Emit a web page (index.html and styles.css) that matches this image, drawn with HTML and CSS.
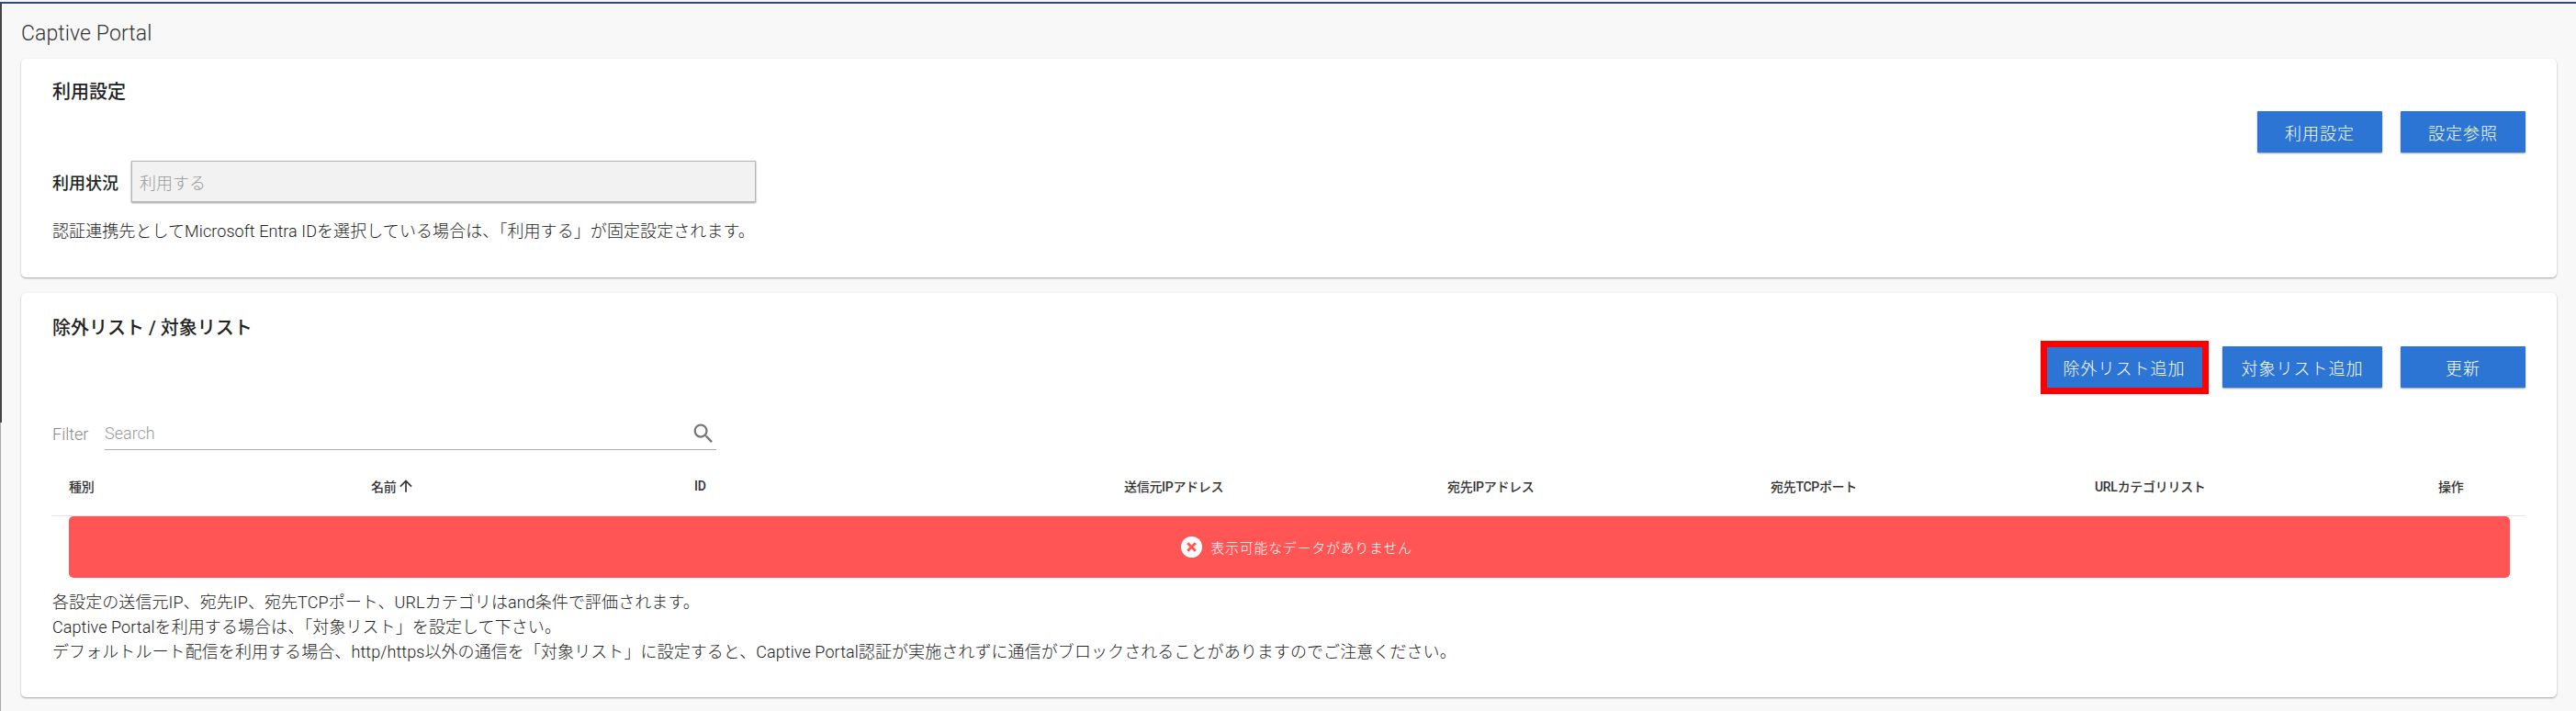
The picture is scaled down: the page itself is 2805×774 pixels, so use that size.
FILE: index.html
```html
<!DOCTYPE html>
<html lang="ja">
<head>
<meta charset="utf-8">
<title>Captive Portal</title>
<link rel="stylesheet" href="styles.css">
</head>
<body>
<main class="page">
  <h1 class="page-title">Captive Portal</h1>
  <section class="card card-usage">
    <h2 class="card-title">利用設定</h2>
    <div class="actions actions-usage">
      <button class="btn">利用設定</button>
      <button class="btn">設定参照</button>
    </div>
    <div class="status-row">
      <span class="status-label">利用状況</span>
      <div class="status-field">利用する</div>
    </div>
    <p class="note note-usage">認証連携先としてMicrosoft Entra IDを選択している場合は、「利用する」が固定設定されます。</p>
  </section>
  <section class="card card-list">
    <h2 class="card-title">除外リスト / 対象リスト</h2>
    <div class="actions actions-list">
      <button class="btn btn-marked">除外リスト追加</button>
      <button class="btn">対象リスト追加</button>
      <button class="btn">更新</button>
    </div>
    <div class="filter">
      <span class="filter-label">Filter</span>
      <div class="filter-box">
        <span class="filter-placeholder">Search</span>
        <svg class="filter-icon" viewBox="0 0 24 24" aria-hidden="true"><path d="M15.5 14h-.79l-.28-.27A6.47 6.47 0 0 0 16 9.5 6.5 6.5 0 1 0 9.5 16c1.61 0 3.09-.59 4.23-1.57l.27.28v.79l5 4.99L20.49 19l-4.99-5zm-6 0C7.01 14 5 11.99 5 9.5S7.01 5 9.5 5 14 7.01 14 9.5 11.99 14 9.5 14z"/></svg>
      </div>
    </div>
    <div class="table">
      <div class="thead">
        <div class="th">種別</div>
        <div class="th">名前 <svg class="sort-icon" viewBox="0 0 24 24" aria-hidden="true"><path d="M4 12l1.41 1.41L11 7.83V20h2V7.83l5.58 5.59L20 12l-8-8-8 8z"/></svg></div>
        <div class="th">ID</div>
        <div class="th">送信元IPアドレス</div>
        <div class="th">宛先IPアドレス</div>
        <div class="th">宛先TCPポート</div>
        <div class="th">URLカテゴリリスト</div>
        <div class="th">操作</div>
      </div>
      <div class="empty">
        <svg class="empty-icon" viewBox="0 0 24 24" aria-hidden="true"><circle cx="12" cy="12" r="12" fill="#fff"/><path d="M7.5 7.5l9 9M16.5 7.5l-9 9" stroke="#ff5555" stroke-width="3" fill="none"/></svg>
        <span>表示可能なデータがありません</span>
      </div>
    </div>
    <div class="note note-list">
      <p>各設定の送信元IP、宛先IP、宛先TCPポート、URLカテゴリはand条件で評価されます。</p>
      <p>Captive Portalを利用する場合は、「対象リスト」を設定して下さい。</p>
      <p>デフォルトルート配信を利用する場合、http/https以外の通信を「対象リスト」に設定すると、Captive Portal認証が実施されずに通信がブロックされることがありますのでご注意ください。</p>
    </div>
  </section>
</main>
</body>
</html>
```
FILE: styles.css
```css
* { box-sizing: border-box; }
html, body { margin: 0; height: 100%; }
body {
  background: #f8f8f8;
  color: #222;
  font-family: Roboto, "Noto Sans CJK JP", sans-serif;
  font-size: 18px;
  overflow: hidden;
}
.page {
  height: 772px;
  margin-top: 2px;
  padding: 0 21px 0 23px;
  border-top: 2px solid #2f4a80;
  background:
    linear-gradient(#444, #444) 0 0 / 2px 456px no-repeat,
    linear-gradient(#aaa, #aaa) 0 456px / 1px 100% no-repeat;
}
.page-title {
  margin: 0;
  height: 60px;
  padding-top: 4px;
  display: flex;
  align-items: center;
  font-size: 23px;
  letter-spacing: .1px;
  font-weight: 300;
  color: #333;
}
.card {
  background: #fff;
  border-radius: 5px;
  box-shadow: 0 1px 2px rgba(0,0,0,.35);
  padding: 0 34px;
}
.card-usage { height: 238px; padding-top: 24px; }
.card-list { height: 440px; margin-top: 17px; padding-top: 26px; }
.card-title {
  margin: 0;
  font-size: 20px;
  line-height: 24px;
  font-weight: 500;
  color: #222;
}
.actions { display: flex; justify-content: flex-end; gap: 20px; }
.actions-usage { margin-top: 9px; }
.actions-list { margin-top: 8px; }
.btn {
  min-width: 136px;
  height: 45px;
  padding: 0 20.5px;
  background: #2d75d4;
  color: #fff;
  border: 0;
  border-radius: 1px;
  font: inherit;
  font-weight: 300;
  letter-spacing: 1px;
  box-shadow: 0 1px 2px rgba(0,0,0,.4);
  position: relative;
}
.btn-marked::after {
  content: "";
  position: absolute;
  inset: -6px -5px -7px -4px;
  border: 7px solid #ff0000;
}
.status-row { display: flex; align-items: center; gap: 14px; margin-top: 9px; }
.status-label { font-weight: 500; width: 72px; }
.status-field {
  width: 680px;
  height: 45px;
  padding: 0 8px;
  display: flex;
  align-items: center;
  background: #f2f2f2;
  border: 1px solid #b5b5b5;
  box-shadow: 0 1px 2px rgba(0,0,0,.4);
  color: #999;
  font-weight: 300;
}
.note { margin: 0; font-weight: 300; color: #222; line-height: 27px; letter-spacing: .08px; }
.note p { margin: 0; }
.note-usage { margin-top: 18px; }
.filter { display: flex; align-items: center; margin-top: 27px; gap: 16px; }
.filter-label { color: #888; margin-top: 5px; font-weight: 300; width: 41px; }
.filter-box {
  width: 666px;
  height: 41px;
  padding-top: 5px;
  display: flex;
  align-items: center;
  justify-content: space-between;
  border-bottom: 1px solid #aaa;
  color: #999;
  font-weight: 300;
}
.filter-icon { width: 28px; height: 28px; fill: #777; }
.table { margin-top: 20px; }
.thead {
  display: grid;
  grid-template-columns: 329px 352px 468px 352px 352px 353px 374px 113px;
  height: 52px;
  padding-bottom: 14px;
  align-items: center;
  border-bottom: 1px solid #e5e5e5;
}
.th {
  padding-left: 18px;
  font-size: 14px;
  font-weight: 500;
  letter-spacing: -.3px;
  color: #333;
  display: flex;
  align-items: center;
  gap: 1px;
}
.sort-icon { width: 20px; height: 20px; fill: #333; }
.empty {
  margin: 0 17px 0 18px;
  height: 67px;
  padding-left: 16px;
  background: #ff5555;
  border-radius: 5px;
  color: #fff;
  font-size: 15px;
  font-weight: 300;
  letter-spacing: .7px;
  display: flex;
  align-items: center;
  justify-content: center;
  gap: 9px;
}
.empty-icon { width: 23px; height: 23px; }
.note-list { margin-top: 13px; }
```
